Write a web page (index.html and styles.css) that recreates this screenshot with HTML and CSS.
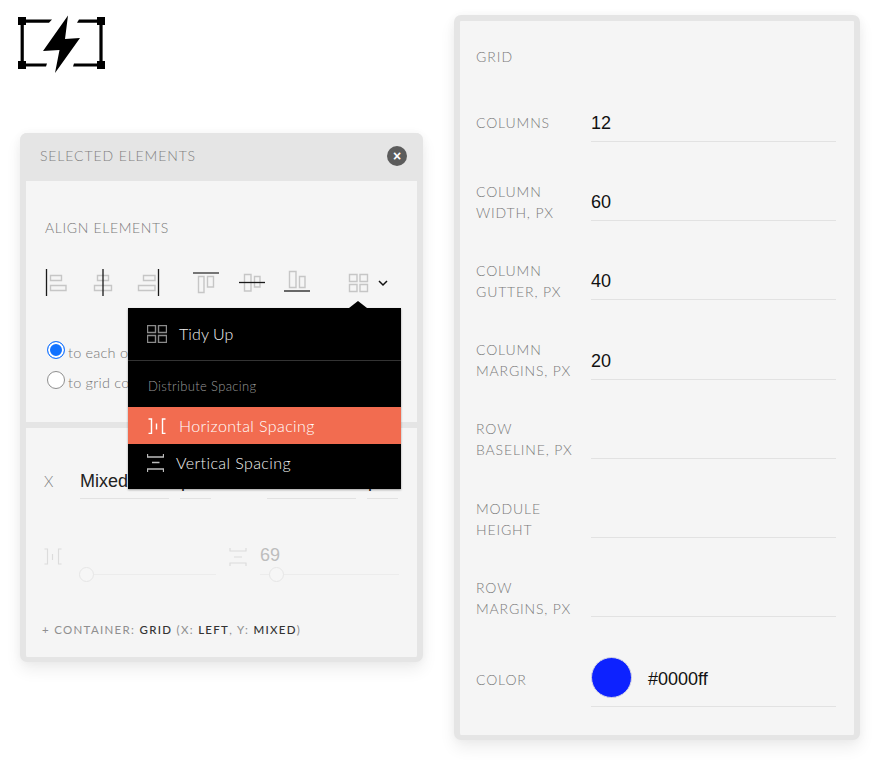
FILE: index.html
```html
<!DOCTYPE html>
<html lang="en">
<head>
<meta charset="utf-8">
<title>Grid panels</title>
<link rel="stylesheet" href="styles.css">
</head>
<body>
<main class="page">
  <div class="left-col">
    <svg class="logo" width="87" height="58" viewBox="18 15 87 58">
      <g fill="#000">
        <rect x="18" y="17" width="8" height="8"/><rect x="97" y="17" width="8" height="8"/>
        <rect x="18" y="61" width="8" height="8"/><rect x="97" y="61" width="8" height="8"/>
        <rect x="20.6" y="25" width="3.2" height="36"/><rect x="99.4" y="25" width="3.2" height="36"/>
        <path d="M26 19.5H52L49 22.8H26Z"/><path d="M79 19.5H97V22.8H77Z"/>
        <path d="M26 63.4H47L46 66.6H26Z"/><path d="M74 63.4H97V66.6H73Z"/>
        <path d="M68 15.5L43 51L59.5 50L55 73L80 38L65 39Z"/>
      </g>
    </svg>

    <section class="panel selected">
      <header class="panel-head">
        <span class="head-title">SELECTED ELEMENTS</span>
        <span class="close">&#215;</span>
      </header>

      <div class="align-section">
        <h2 class="section-title">ALIGN ELEMENTS</h2>
        <div class="toolbar">
          <div class="tool-group tool-group-h">
            <svg class="tool" viewBox="0 0 28 28"><path class="rule-dark" d="M1.5 0V27"/><path class="box" d="M5.5 6.5H16.5V11.5H5.5ZM5.5 16.5H21V21.5H5.5Z"/></svg>
            <svg class="tool" viewBox="0 0 28 28"><path class="box" d="M8.5 6.5H19.5V11.5H8.5ZM5.5 16.5H22.5V21.5H5.5Z"/><path class="rule-dark" d="M14 0V27"/></svg>
            <svg class="tool" viewBox="0 0 28 28"><path class="box" d="M11.5 6.5H23V11.5H11.5ZM6.5 16.5H23V21.5H6.5Z"/><path class="rule-dark" d="M26.5 0V27"/></svg>
          </div>
          <div class="tool-group tool-group-v">
            <svg class="tool" viewBox="0 0 28 28"><path class="rule-mid" d="M1 4H27"/><path class="box" d="M6.5 7.5H12V23.5H6.5ZM15.5 7.5H21.5V18H15.5Z"/></svg>
            <svg class="tool" viewBox="0 0 28 28"><path class="box" d="M6.5 5.5H13V22H6.5ZM16.5 7.5H22V18H16.5Z"/><path class="rule-dark" d="M1 13.5H27"/></svg>
            <svg class="tool" viewBox="0 0 28 28"><path class="box" d="M6.5 2.5H13V18.5H6.5ZM16.5 7.5H22V18.5H16.5Z"/><path class="rule-dark" d="M1 22H27"/></svg>
          </div>
          <svg class="tool tool-grid" viewBox="0 0 28 28"><path class="box" d="M4.5 5.5H12V12.5H4.5ZM15 5.5H22.5V12.5H15ZM4.5 15.5H12V22.5H4.5ZM15 15.5H22.5V22.5H15Z"/></svg>
          <svg class="chevron" width="10" height="8" viewBox="0 0 10 8"><path d="M1 2L5 6L9 2" fill="none" stroke="#111" stroke-width="1.5"/></svg>
        </div>
        <div class="radios">
          <label class="radio-row"><input class="radio" type="radio" name="to" checked><span>to each object</span></label>
          <label class="radio-row"><input class="radio" type="radio" name="to"><span>to grid columns</span></label>
        </div>
      </div>

      <div class="position-section">
        <div class="pos-row">
          <span class="pos-label">X</span>
          <span class="pos-input pos-wide">Mixed</span>
          <span class="pos-input pos-unit">px</span>
          <span class="pos-label pos-label-y">Y</span>
          <span class="pos-input pos-wide">Mixed</span>
          <span class="pos-input pos-unit">px</span>
        </div>
        <div class="slider-row">
          <div class="slider-group slider-first">
            <svg class="faint-icon" width="18" height="18" viewBox="0 0 18 18"><path d="M0.5 1H3.5V16H0.5M8.5 6V12M17.5 1H14.5V16H17.5"/></svg>
            <div class="slider-col">
              <div class="slider-value">&nbsp;</div>
              <div class="track"><span class="knob knob-a"></span></div>
            </div>
          </div>
          <div class="slider-group slider-second">
            <svg class="faint-icon" width="18" height="18" viewBox="0 0 18 18"><path d="M1 0V3H17V0M5 9H13M1 18V15H17V18"/></svg>
            <div class="slider-col">
              <div class="slider-value">69</div>
              <div class="track"><span class="knob knob-b"></span></div>
            </div>
          </div>
        </div>
        <p class="container-note">+ CONTAINER: <b>GRID</b> (X: <b>LEFT</b>, Y: <b>MIXED</b>)</p>
      </div>

      <div class="menu">
        <div class="menu-item menu-tidy">
          <svg width="20" height="18" viewBox="0 0 20 18"><path d="M0.5 0.5H8.5V7.5H0.5ZM11.5 0.5H19.5V7.5H11.5ZM0.5 10.5H8.5V17.5H0.5ZM11.5 10.5H19.5V17.5H11.5Z" fill="none" stroke="#8a8a8a" stroke-width="1.4"/></svg>
          <span>Tidy Up</span>
        </div>
        <div class="menu-heading">Distribute Spacing</div>
        <div class="menu-item menu-active">
          <svg width="18" height="16" viewBox="0 0 18 16"><path d="M0.5 1H3.5V15.5H0.5M8.5 5.5V11.5M17.5 1H14.5V15.5H17.5" fill="none" stroke="#fff" stroke-width="1.4"/></svg>
          <span>Horizontal Spacing</span>
        </div>
        <div class="menu-item menu-vertical">
          <svg width="17" height="18" viewBox="0 0 17 18"><path d="M0.5 0V3H16.5V0M5 8.5H12.5M0.5 18V15H16.5V18" fill="none" stroke="#bdbdbd" stroke-width="1.3"/></svg>
          <span>Vertical Spacing</span>
        </div>
      </div>
    </section>
  </div>

  <section class="panel grid-panel">
    <h2 class="grid-title">GRID</h2>
    <div class="field"><span class="field-label">COLUMNS</span><span class="field-value">12</span></div>
    <div class="field"><span class="field-label">COLUMN<br>WIDTH, PX</span><span class="field-value">60</span></div>
    <div class="field"><span class="field-label">COLUMN<br>GUTTER, PX</span><span class="field-value">40</span></div>
    <div class="field"><span class="field-label">COLUMN<br>MARGINS, PX</span><span class="field-value">20</span></div>
    <div class="field"><span class="field-label">ROW<br>BASELINE, PX</span><span class="field-value"></span></div>
    <div class="field"><span class="field-label">MODULE<br>HEIGHT</span><span class="field-value"></span></div>
    <div class="field"><span class="field-label">ROW<br>MARGINS, PX</span><span class="field-value"></span></div>
    <div class="field field-color">
      <span class="field-label">COLOR</span>
      <span class="field-value color-value"><span class="swatch"></span><span class="color-text">#0000ff</span></span>
    </div>
  </section>
</main>
</body>
</html>
```

FILE: styles.css
```css
* { box-sizing: border-box; }
html, body { margin: 0; background: #fff; }
body { font-family: "Lato", "Liberation Sans", sans-serif; width: 880px; height: 765px; overflow: hidden; }

.page { display: flex; align-items: flex-start; gap: 31px; padding: 15px 0 0 20px; }
.left-col { width: 403px; }
.logo { display: block; margin-left: -2px; }

.panel {
  position: relative;
  background: #f5f5f5;
  border: 6px solid #e5e5e5;
  border-radius: 7px;
  box-shadow: 0 8px 16px rgba(0, 0, 0, .07), 0 0 10px rgba(0, 0, 0, .04);
}

/* Selected elements panel */
.selected { margin-top: 60px; height: 529px; border-top: 0; border-bottom-width: 5px; }
.panel-head {
  display: flex; align-items: center; justify-content: space-between;
  height: 48px; margin: 0 -6px; padding: 0 16px 2px 20px;
  background: #e5e5e5; border-radius: 7px 7px 0 0;
}
.head-title { margin-bottom: 1px; font-size: 14px; font-weight: 300; letter-spacing: .88px; color: #808080; }
.close {
  width: 20px; height: 20px; border-radius: 50%;
  background: #5c5c5c; color: #fff;
  display: flex; align-items: center; justify-content: center;
  font: bold 14px/1 "Liberation Sans", sans-serif;
}

.align-section { height: 241px; padding: 37px 0 0 19px; }
.section-title { margin: 0; font-size: 14px; line-height: 20px; font-weight: 300; letter-spacing: .65px; color: #7a7a7a; }

.toolbar { display: flex; align-items: center; margin-top: 31px; }
.tool-group { display: flex; }
.tool-group-h { gap: 15.5px; }
.tool-group-v { gap: 17.5px; margin-left: 32px; }
.tool { display: block; width: 28px; height: 28px; flex: none; }
.tool-grid { margin-left: 34px; }
.chevron { margin-left: 5px; }
.box { fill: none; stroke: #c6c6c6; stroke-width: 1.4; }
.rule-dark { fill: none; stroke: #1a1a1a; stroke-width: 1.3; }
.rule-mid { fill: none; stroke: #555; stroke-width: 1.6; }

.radios { margin: 40px 0 0 2px; }
.radio-row { display: flex; align-items: center; gap: 3px; height: 30px; font-size: 14.5px; font-weight: 300; letter-spacing: .2px; color: #777; }
.radio {
  appearance: none; margin: 0 0 5px; flex: none;
  width: 18px; height: 18px; border-radius: 50%;
  border: 1.5px solid #8f8f8f; background: #fff;
}
.radio:checked { border-color: #1f78ff; box-shadow: inset 0 0 0 2px #fff; background: #1272ff; }

.position-section { height: 235px; border-top: 6px solid #e5e5e5; }
.pos-row { display: flex; align-items: flex-end; height: 71px; }
.pos-label { flex: none; width: 36px; margin-left: 18px; padding-bottom: 8px; font-size: 15px; font-weight: 300; line-height: 20px; color: #808080; }
.pos-label-y { width: 38px; margin-left: 18px; }
.pos-input {
  flex: none; height: 30px; border-bottom: 1px solid #e2e2e2;
  font: 18px/25px "Liberation Sans", sans-serif; color: #222;
}
.pos-wide { width: 89px; }
.pos-unit { width: 31px; margin-left: 11px; padding-left: 1px; }

.slider-row { display: flex; margin-top: 44px; }
.slider-group { display: flex; }
.slider-first { width: 203px; padding-left: 18px; gap: 18px; }
.slider-second { gap: 13px; }
.faint-icon { flex: none; margin-top: 5px; fill: none; stroke: #dcdcdc; stroke-width: 1.2; }
.slider-col { display: flex; flex-direction: column; }
.slider-first .slider-col { width: 136px; }
.slider-second .slider-col { width: 139px; }
.slider-value { height: 24px; font: 18px/24px "Liberation Sans", sans-serif; color: #bdbdbd; }
.track { position: relative; height: 14px; }
.track::before { content: ""; position: absolute; left: 0; right: 0; top: 7px; height: 1px; background: #ececec; }
.knob {
  position: absolute; top: 0; width: 15px; height: 15px; border-radius: 50%;
  background: #f6f6f6; border: 1px solid #e6e6e6;
}
.knob-a { left: -1.5px; }
.knob-b { left: 8.5px; }

.container-note { margin: 41px 0 0 16px; font-size: 11.5px; line-height: 16px; letter-spacing: 1.3px; color: #8f8f8f; }
.container-note b { font-weight: 500; color: #333; }

/* Dropdown */
.menu {
  position: absolute; left: 102px; top: 175px; width: 273px; height: 181px;
  background: #000; color: #fff;
  box-shadow: 0 1px 2px rgba(0, 0, 0, .35);
}
.menu::before {
  content: ""; position: absolute; top: -7px; left: 221px;
  border-left: 9px solid transparent; border-right: 9px solid transparent; border-bottom: 7px solid #000;
}
.menu-item { display: flex; align-items: center; font-size: 16px; font-weight: 300; letter-spacing: .4px; color: #f2f2f2; }
.menu-item svg { flex: none; }
.menu-tidy { height: 53px; padding: 0 0 1px 19px; gap: 12px; border-bottom: 1px solid #333; letter-spacing: .1px; }
.menu-tidy span { margin-bottom: 1px; }
.menu-heading { height: 46px; padding: 15px 0 0 20px; font-size: 13px; font-weight: 300; line-height: 20px; letter-spacing: .35px; color: #999; }
.menu-active { height: 37px; padding-left: 20px; gap: 13px; background: #f26c50; color: #fff; }
.menu-vertical { height: 45px; padding: 0 0 8px 19px; gap: 12px; }

/* Grid panel */
.grid-panel { width: 406px; height: 725px; padding: 0 19px 0 16px; border-bottom-width: 5px; }
.grid-title { margin: 0; height: 41.6px; padding-top: 26px; font-size: 14px; line-height: 20px; font-weight: 300; letter-spacing: 1px; color: #7a7a7a; }
.field { display: flex; align-items: flex-end; height: 79.25px; }
.field-label {
  flex: none; width: 115px; margin-bottom: -1.5px; height: 42px;
  display: flex; align-items: center;
  font-size: 14px; font-weight: 300; line-height: 21px; letter-spacing: .85px; color: #7a7a7a;
}
.field-value {
  flex: none; width: 245px; height: 38px; border-bottom: 1px solid #e2e2e2;
  font: 18px/39px "Liberation Sans", sans-serif; color: #111;
}
.field-color { height: 90px; }
.field-color .field-label { margin-bottom: 7px; }
.color-value { display: flex; align-items: center; gap: 16px; height: 50px; padding: 0 0 8px; }
.color-text { margin-top: 2px; line-height: 22px; }
.swatch { width: 41px; height: 41px; border-radius: 50%; background: #0d22ff; border: 1px solid #d5d5e5; }
```
